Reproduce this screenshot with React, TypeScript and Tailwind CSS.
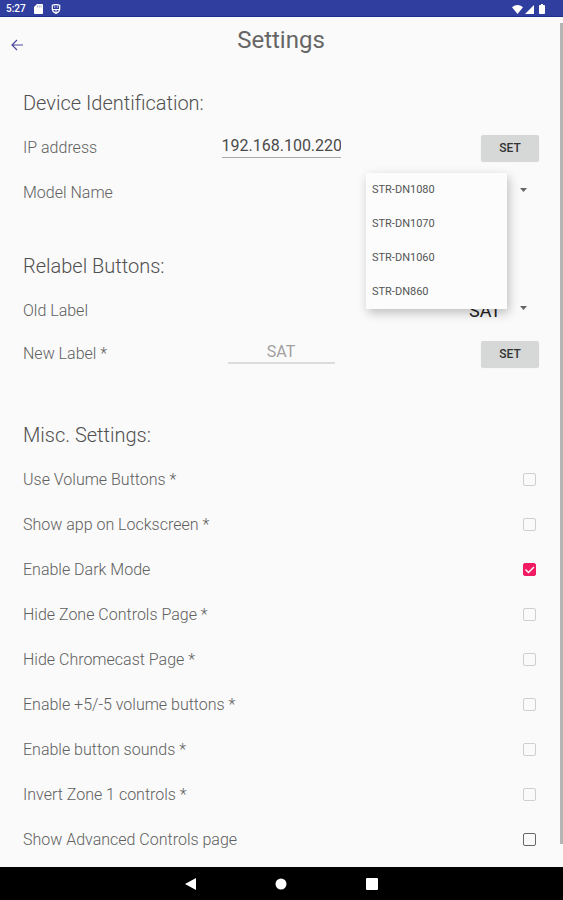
import { useState } from "react";
import type { ReactNode } from "react";

interface Option {
  id: string;
  label: string;
  checked?: boolean;
  strong?: boolean;
}

const models = ["STR-DN1080", "STR-DN1070", "STR-DN1060", "STR-DN860"];

const inputs = ["SAT", "BD/DVD", "GAME", "TV"];

const initialOptions: Option[] = [
  { id: "volume", label: "Use Volume Buttons *" },
  { id: "lockscreen", label: "Show app on Lockscreen *" },
  { id: "dark", label: "Enable Dark Mode", checked: true },
  { id: "zones", label: "Hide Zone Controls Page *" },
  { id: "chromecast", label: "Hide Chromecast Page *" },
  { id: "steps", label: "Enable +5/-5 volume buttons *" },
  { id: "sounds", label: "Enable button sounds *" },
  { id: "invert", label: "Invert Zone 1 controls *" },
  { id: "advanced", label: "Show Advanced Controls page", strong: true },
];

function StatusBar() {
  return (
    <div className="flex h-[17px] items-center justify-between border-b border-[#1f2f8f] bg-[#303f9f] pr-[18px] pl-[6px] pt-[2px] text-white">
      <div className="flex items-center">
        <span className="w-[28px] text-[10px] leading-4 font-medium">5:27</span>
        <svg className="h-[10px] w-[9px]" viewBox="0 0 9 10" fill="currentColor">
          <path d="M3 0h5a1 1 0 0 1 1 1v8a1 1 0 0 1-1 1H1a1 1 0 0 1-1-1V3z" />
          <path d="M3.5 1.5v2M5.3 1.5v2M7.1 1.5v2" stroke="#7d87c4" strokeWidth="0.7" />
        </svg>
        <svg className="ml-2 h-[10px] w-[10px]" viewBox="0 0 10 10" fill="none" stroke="currentColor">
          <path d="M1.3 1.3Q5 -.2 8.7 1.3V5Q8.5 8 5 9.4 1.5 8 1.3 5z" strokeWidth="1.2" />
          <path d="M1.5 5.5h7M5 5.5V9" />
          <path d="M3 3h1.3M5.8 3h1.3" strokeWidth="1.2" />
        </svg>
      </div>
      <div className="flex items-center gap-[2px]">
        <svg className="h-[9px] w-[11px]" viewBox="0 0 11 9" fill="currentColor">
          <path d="M0 2.2Q5.5-2 11 2.2L5.5 9z" />
        </svg>
        <svg className="h-[9px] w-[9px]" viewBox="0 0 9 9" fill="currentColor">
          <path d="M9 0v9H0z" />
        </svg>
        <svg className="ml-[3px] h-[10px] w-[6px]" viewBox="0 0 6 10" fill="currentColor">
          <path d="M2 0h2v1h1.2q.8 0 .8.8v7.4q0 .8-.8.8H.8Q0 10 0 9.200V1.800Q0 1 .8 1H2z" />
        </svg>
      </div>
    </div>
  );
}

function Section({ title, children }: { title: string; children: ReactNode }) {
  return (
    <section>
      <h2 className="flex h-[45px] items-center text-[20px] font-light text-[#505050]">{title}</h2>
      {children}
    </section>
  );
}

interface RowProps {
  label: string;
  htmlFor: string;
  compact?: boolean;
  children: ReactNode;
}

function Row({ label, htmlFor, compact, children }: RowProps) {
  return (
    <div
      className={`relative grid grid-cols-[1fr_auto_1fr] items-center ${compact ? "h-[42px]" : "h-[45px]"}`}
    >
      <label htmlFor={htmlFor} className="text-[16px] font-light text-[#606060]">
        {label}
      </label>
      {children}
    </div>
  );
}

function SetButton() {
  return (
    <button
      type="button"
      className="col-start-3 h-[26px] w-[58px] justify-self-end rounded-xs bg-[#d6d7d7] text-[12px] font-medium text-[#333] shadow-[0_1px_1px_rgba(0,0,0,0.15)]"
    >
      SET
    </button>
  );
}

function Caret() {
  return (
    <svg
      className="pointer-events-none absolute top-[18px] right-[12px] h-[4px] w-[7px] text-[#666]"
      viewBox="0 0 7 4"
      fill="currentColor"
    >
      <path d="M0 0h7L3.500 4z" />
    </svg>
  );
}

const selectClass =
  "col-start-3 h-8 appearance-none justify-self-end bg-transparent pr-[38px] text-right text-[18px] text-[#222] outline-none";

export default function App() {
  const [model, setModel] = useState(models[0]);
  const [open, setOpen] = useState(true);
  const [options, setOptions] = useState(initialOptions);

  const toggle = (id: string) => {
    setOptions(options.map((o) => (o.id === id ? { ...o, checked: !o.checked } : o)));
  };

  return (
    <div className="flex min-h-screen flex-col bg-[#fafafa] font-[Roboto,sans-serif]">
      <StatusBar />

      <main className="relative flex-1 pr-6 pl-[23px]">
        <header className="relative flex h-[63px] justify-center pt-2">
          <button type="button" aria-label="Back" className="absolute top-[22px] left-[-12px]">
            <svg className="h-[12px] w-[12px]" viewBox="0 0 12 12" fill="none" stroke="#4a4a9c" strokeWidth="1.2">
              <path d="M6 1L1 6l5 5M1 6h11" />
            </svg>
          </button>
          <h1 className="text-[24px] leading-[30px] text-[#666]">Settings</h1>
        </header>

        <Section title="Device Identification:">
          <Row label="IP address" htmlFor="ip">
            <input
              id="ip"
              defaultValue="192.168.100.220"
              className="h-[20px] w-[119px] border-b border-[#a8a8a8] bg-transparent pb-[2px] text-center text-[16px] text-[#4a4a4a] outline-none"
            />
            <SetButton />
          </Row>
          <Row label="Model Name" htmlFor="model">
            <select id="model" value={model} onChange={(e) => setModel(e.target.value)} className={selectClass}>
              {models.map((m) => (
                <option key={m}>{m}</option>
              ))}
            </select>
            <Caret />
            {open && (
              <div className="absolute top-[3px] right-[32px] z-10 w-[141px] bg-[#fcfcfc] shadow-[2px_4px_10px_rgba(0,0,0,0.24)]">
                {models.map((m) => (
                  <button
                    key={m}
                    type="button"
                    onClick={() => {
                      setModel(m);
                      setOpen(false);
                    }}
                    className="block h-[34px] w-full px-[6px] text-left text-[11px] text-[#555]"
                  >
                    {m}
                  </button>
                ))}
              </div>
            )}
          </Row>
        </Section>

        <div className="mt-7">
          <Section title="Relabel Buttons:">
            <Row label="Old Label" htmlFor="old-label">
              <select id="old-label" className={selectClass}>
                {inputs.map((i) => (
                  <option key={i}>{i}</option>
                ))}
              </select>
              <Caret />
            </Row>
            <Row label="New Label *" htmlFor="new-label" compact>
              <input
                id="new-label"
                placeholder="SAT"
                className="h-[20px] w-[107px] border-b-2 border-[#dcdcdc] bg-transparent pb-[2px] text-center text-[16px] placeholder:text-[#a0a0a0] outline-none"
              />
              <SetButton />
            </Row>
          </Section>
        </div>

        <div className="mt-[37px]">
          <Section title="Misc. Settings:">
            {options.map((o) => (
              <Row key={o.id} label={o.label} htmlFor={o.id}>
                <span className="relative col-start-3 mr-[3px] size-[13px] justify-self-end">
                  <input
                    id={o.id}
                    type="checkbox"
                    checked={!!o.checked}
                    onChange={() => toggle(o.id)}
                    className={`peer block size-[13px] appearance-none rounded-xs border checked:border-[#f01b62] checked:bg-[#f01b62] ${
                      o.strong ? "border-[#666]" : "border-[#cfcfcf]"
                    }`}
                  />
                  <svg
                    className="pointer-events-none absolute inset-0 hidden size-[13px] peer-checked:block"
                    viewBox="0 0 13 13"
                    fill="none"
                    stroke="white"
                    strokeWidth="1.4"
                  >
                    <path d="M2.500 6.500l3 3L11 4" />
                  </svg>
                </span>
              </Row>
            ))}
          </Section>
        </div>

        {/* scroll indicator */}
        <div className="absolute top-[6px] right-0 bottom-[23px] w-[3px] bg-[#b4b4b4]" />
      </main>

      <nav className="flex h-[33px] items-center justify-center gap-[79px] bg-black text-white">
        <button type="button" aria-label="Back">
          <svg className="h-[12px] w-[11px]" viewBox="0 0 11 12" fill="currentColor">
            <path d="M11 0v12L0 6z" />
          </svg>
        </button>
        <button type="button" aria-label="Home">
          <svg className="size-[12px]" viewBox="0 0 12 12" fill="currentColor">
            <circle cx="6" cy="6" r="5.500" />
          </svg>
        </button>
        <button type="button" aria-label="Recent apps">
          <svg className="size-[12px]" viewBox="0 0 12 12" fill="currentColor">
            <rect width="12" height="12" rx="1" />
          </svg>
        </button>
      </nav>
    </div>
  );
}
